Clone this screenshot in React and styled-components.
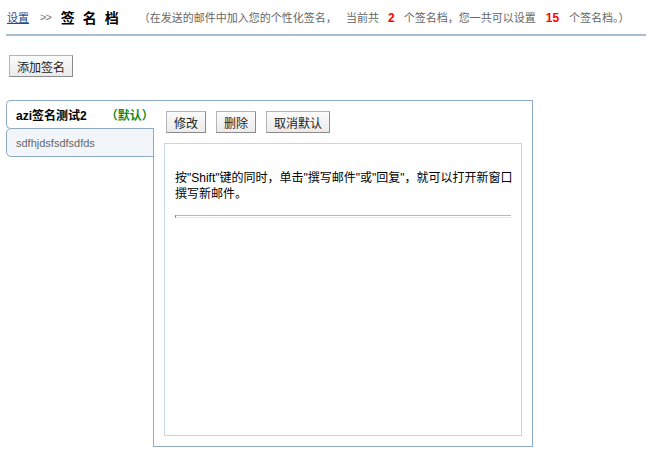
import React from "react";
import styled, { createGlobalStyle } from "styled-components";

const GlobalStyle = createGlobalStyle`
  html, body { margin: 0; padding: 0; background: #fff; }
  body {
    font-family: "Liberation Sans", "Noto Sans CJK SC", sans-serif;
    font-size: 12px;
    color: #000;
  }
`;

const Page = styled.div`
  width: 650px;
  height: 454px;
  overflow: hidden;
`;

const Header = styled.div`
  display: flex;
  align-items: center;
  height: 34px;
  margin: 0 4px 0 6px;
  padding-left: 1px;
  border-bottom: 2px solid #a8bfd3;
  white-space: nowrap;
`;

const Crumb = styled.a`
  font-size: 11px;
  color: #1b4f8f;
  text-decoration: underline;
  cursor: pointer;
`;

const Sep = styled.span`
  font-size: 11px;
  color: #777;
  margin: 0 10px 0 11px;
  letter-spacing: -1px;
`;

const Title = styled.span`
  font-size: 14px;
  font-weight: bold;
  letter-spacing: 8px;
  margin-right: 12px;
`;

const Desc = styled.span`
  font-size: 11px;
  color: #666;
`;

const Num = styled.b`
  color: #f00;
  font-size: 12px;
  margin: 0 ${(p) => p.$gap}px;
`;

const Toolbar = styled.div`
  padding: 19px 0 0 9px;
`;

const Button = styled.button`
  height: 22px;
  padding: 0 7px;
  font-family: "Liberation Sans", "Noto Sans CJK SC", sans-serif;
  font-size: 12px;
  color: #222;
  background: linear-gradient(#fbfbfb, #ebebeb);
  border: 1px solid #b4b4b4;
  border-right-color: #8a8a8a;
  border-bottom-color: #8a8a8a;
  border-radius: 0;
  cursor: pointer;
`;

const Section = styled.div`
  display: flex;
  margin: 23px 0 0 6px;
`;

const TabList = styled.div`
  display: flex;
  flex-direction: column;
  width: 148px;
  margin-right: -1px;
  position: relative;
  z-index: 1;
`;

const Tab = styled.div`
  height: 27px;
  display: flex;
  align-items: center;
  padding-left: 9px;
  border: 1px solid #8eabc6;
  border-radius: 5px 0 0 5px;
  background: ${(p) => (p.$active ? "#fff" : "#f2f6fa")};
  border-right: ${(p) => (p.$active ? "none" : "1px solid #8eabc6")};
  margin-top: ${(p) => (p.$active ? "0" : "-1px")};
  color: ${(p) => (p.$active ? "#000" : "#666")};
  font-size: ${(p) => (p.$active ? "12px" : "11px")};
  font-weight: ${(p) => (p.$active ? "bold" : "normal")};
`;

const Default = styled.span`
  color: #158a15;
  font-weight: bold;
  margin-left: 19px;
`;

const Panel = styled.div`
  width: 358px;
  height: 325px;
  padding: 10px;
  border: 1px solid #8eabc6;
  display: flex;
  flex-direction: column;
`;

const Actions = styled.div`
  display: flex;
  gap: 10px;
  padding-left: 2px;
`;

const Preview = styled.div`
  flex: 1;
  margin-top: 10px;
  border: 1px solid #c8d6e3;
  padding: 26px 4px 0 10px;
`;

const Text = styled.p`
  margin: 0;
  font-size: 12px;
  line-height: 16px;
  color: #000;
`;

const Rule = styled.div`
  margin: 13px 6px 0 0;
  height: 1px;
  border-top: 1px solid #b8b8b8;
  border-bottom: 1px solid #e6e6e6;
  border-left: 1px solid #777;
`;

export default function App() {
  return (
    <Page>
      <GlobalStyle />
      <Header>
        <Crumb>设置</Crumb>
        <Sep>&gt;&gt;</Sep>
        <Title>签名档</Title>
        <Desc>
          （在发送的邮件中加入您的个性化签名，&nbsp;&nbsp;&nbsp;当前共
          <Num $gap={9}>2</Num>
          个签名档，您一共可以设置
          <Num $gap={10}>15</Num>
          个签名档。）
        </Desc>
      </Header>
      <Toolbar>
        <Button>添加签名</Button>
      </Toolbar>
      <Section>
        <TabList>
          <Tab $active>
            azi签名测试2<Default>（默认）</Default>
          </Tab>
          <Tab>sdfhjdsfsdfsdfds</Tab>
        </TabList>
        <Panel>
          <Actions>
            <Button>修改</Button>
            <Button>删除</Button>
            <Button>取消默认</Button>
          </Actions>
          <Preview>
            <Text>
              按"Shift"键的同时，单击"撰写邮件"或"回复"，就可以打开新窗口撰写新邮件。
            </Text>
            <Rule />
          </Preview>
        </Panel>
      </Section>
    </Page>
  );
}
